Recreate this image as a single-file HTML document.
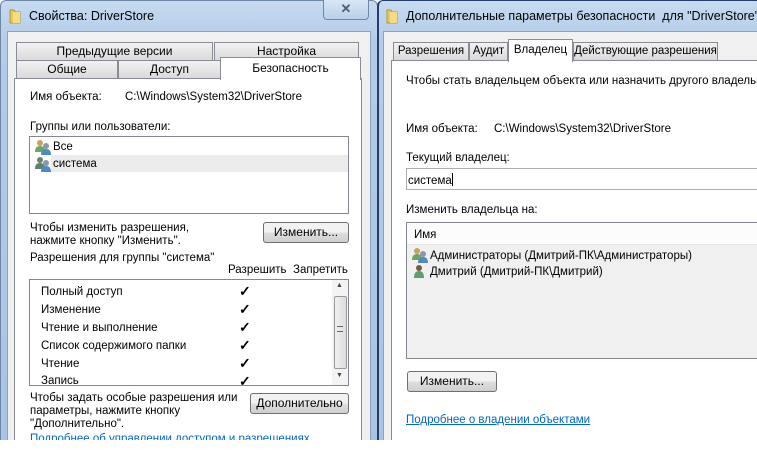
<!DOCTYPE html>
<html><head><meta charset="utf-8"><style>
*{margin:0;padding:0;box-sizing:border-box}
body{width:757px;height:473px;background:#fff;position:relative;overflow:hidden;font-family:"Liberation Sans",sans-serif;font-size:11.5px;color:#000}
.a{position:absolute;white-space:nowrap}
.frame{position:absolute;background:linear-gradient(#c7dbf1,#b4cce8 40px,#a9c3e3);border:1px solid #6d87a7;border-radius:6px 6px 0 0}
.client{position:absolute;background:#f0f0f0;border:1px solid #8da2bf}
.page{position:absolute;background:#fff;border:1px solid #898c95}
.tab{position:absolute;background:linear-gradient(#f2f2f2,#dadada);border:1px solid #898c95;border-bottom:none;text-align:center;font-size:12px;line-height:16px;white-space:nowrap;overflow:hidden}
.tab.sel{background:#fff;z-index:2}
.box{position:absolute;background:#fff;border:1px solid #828790}
.btn{position:absolute;border:1px solid #707070;border-radius:3px;background:linear-gradient(#f2f2f2 45%,#dddddd 55%,#cfcfcf);text-align:center;font-size:12px}
.chk{position:absolute;font-size:14px;font-weight:bold}
</style></head><body>

<!-- LEFT WINDOW -->
<div class="frame" style="left:0;top:0;width:378px;height:445px"></div>
<svg class="a" style="left:9px;top:7px" width="12" height="17"><path d="M1 3h4l1 2h5v11H1z" fill="#e8c860" stroke="#b8962a"/><rect x="4" y="5" width="7" height="11" fill="#f5dc80"/></svg>
<div class="a" style="left:29px;top:9px;font-size:12.5px">Свойства: DriverStore</div>
<div class="a" style="left:323px;top:0;width:46px;height:20px;border:1px solid #6d87a7;border-top:none;border-radius:0 0 4px 4px;background:linear-gradient(#d9e6f5,#b9cfe9);text-align:center;font-weight:bold;color:#4b5d73;font-size:13px;line-height:18px">✕</div>
<div class="client" style="left:7px;top:31px;width:364px;height:414px"></div>
<div class="tab" style="left:16px;top:42px;width:197px;height:18px">Предыдущие версии</div>
<div class="tab" style="left:214px;top:42px;width:145px;height:18px">Настройка</div>
<div class="tab" style="left:16px;top:60px;width:102px;height:18px">Общие</div>
<div class="tab" style="left:118px;top:60px;width:103px;height:18px">Доступ</div>
<div class="tab sel" style="left:220px;top:57px;width:141px;height:23px;line-height:20px">Безопасность</div>
<div class="page" style="left:14px;top:78px;width:348px;height:370px"></div>
<div class="a" style="left:30px;top:91px">Имя объекта:</div>
<div class="a" style="left:125px;top:91px">C:\Windows\System32\DriverStore</div>
<div class="a" style="left:30px;top:121px">Группы или пользователи:</div>
<div class="box" style="left:29px;top:136px;width:320px;height:78px"></div>
<div class="a" style="left:51px;top:155px;width:297px;height:17px;background:#ececec"></div>
<svg class="a" style="left:34px;top:139px" width="18" height="34"><circle cx="6" cy="4" r="3" fill="#c9a060"/><path d="M1 13q0-6 5-6q5 0 5 6z" fill="#6aa860"/><circle cx="12" cy="7" r="3" fill="#8a98a8"/><path d="M7 16q0-6 5-6q5 0 5 6z" fill="#4f8ac0"/><circle cx="6" cy="21" r="3" fill="#708070"/><path d="M1 30q0-6 5-6q5 0 5 6z" fill="#608070"/><circle cx="12" cy="24" r="3" fill="#8a98a8"/><path d="M7 33q0-6 5-6q5 0 5 6z" fill="#4f8ac0"/></svg>
<div class="a" style="left:53px;top:141px">Все</div>
<div class="a" style="left:53px;top:158px">система</div>
<div class="a" style="left:30px;top:222px">Чтобы изменить разрешения,</div>
<div class="a" style="left:30px;top:235px">нажмите кнопку "Изменить".</div>
<div class="btn" style="left:263px;top:222px;width:86px;height:21px;line-height:19px">Изменить...</div>
<div class="a" style="left:30px;top:252px">Разрешения для группы "система"</div>
<div class="a" style="left:228px;top:264px">Разрешить</div>
<div class="a" style="left:293px;top:264px">Запретить</div>
<div class="box" style="left:29px;top:279px;width:320px;height:107px;overflow:hidden">
 <div class="a" style="left:11px;top:6px">Полный доступ</div>
 <div class="a" style="left:11px;top:24px">Изменение</div>
 <div class="a" style="left:11px;top:42px">Чтение и выполнение</div>
 <div class="a" style="left:11px;top:60px">Список содержимого папки</div>
 <div class="a" style="left:11px;top:78px">Чтение</div>
 <div class="a" style="left:11px;top:95px">Запись</div>
 <div class="chk" style="left:209px;top:3px">✓</div>
 <div class="chk" style="left:209px;top:21px">✓</div>
 <div class="chk" style="left:209px;top:39px">✓</div>
 <div class="chk" style="left:209px;top:57px">✓</div>
 <div class="chk" style="left:209px;top:75px">✓</div>
 <div class="chk" style="left:209px;top:93px">✓</div>
 <div class="a" style="left:302px;top:0;width:17px;height:105px;background:#f3f3f3"></div>
 <div class="a" style="left:304px;top:16px;width:13px;height:73px;border:1px solid #9a9a9a;border-radius:2px;background:linear-gradient(90deg,#f0f0f0,#dcdcdc)"></div>
 <div class="a" style="left:306px;top:2px;font-size:7px;color:#444">▲</div>
 <div class="a" style="left:306px;top:92px;font-size:7px;color:#444">▼</div>
 <div class="a" style="left:307px;top:46px;width:6px;height:6px;border-top:1px solid #666;border-bottom:1px solid #666"></div>
</div>
<div class="a" style="left:30px;top:392px">Чтобы задать особые разрешения или</div>
<div class="a" style="left:30px;top:405px">параметры, нажмите кнопку</div>
<div class="a" style="left:30px;top:418px">"Дополнительно".</div>
<div class="btn" style="left:250px;top:393px;width:99px;height:21px;line-height:19px">Дополнительно</div>
<div class="a" style="left:30px;top:433px;color:#0066cc;text-decoration:underline">Подробнее об управлении доступом и разрешениях</div>

<!-- RIGHT WINDOW -->
<div class="frame" style="left:377px;top:0;width:390px;height:445px;border-color:#24406a;border-width:1px 0 0 2px"></div>
<svg class="a" style="left:386px;top:7px" width="12" height="17"><path d="M1 3h4l1 2h5v11H1z" fill="#e8c860" stroke="#b8962a"/><rect x="4" y="5" width="7" height="11" fill="#f5dc80"/></svg>
<div class="a" style="left:406px;top:9px;font-size:12.5px">Дополнительные параметры безопасности &nbsp;для "DriverStore"</div>
<div class="client" style="left:383px;top:31px;width:380px;height:414px"></div>
<div class="tab" style="left:393px;top:42px;width:76px;height:18px;font-size:11.5px">Разрешения</div>
<div class="tab" style="left:469px;top:42px;width:39px;height:18px;font-size:11.5px">Аудит</div>
<div class="tab sel" style="left:508px;top:39px;width:65px;height:23px;line-height:20px;font-size:11.5px">Владелец</div>
<div class="tab" style="left:573px;top:42px;width:145px;height:18px;font-size:11.5px">Действующие разрешения</div>
<div class="a" style="left:391px;top:60px;width:370px;height:380px;background:#fff;border-left:1px solid #898c95;border-top:1px solid #898c95"></div>
<div class="a" style="left:406px;top:75px">Чтобы стать владельцем объекта или назначить другого владельца,</div>
<div class="a" style="left:406px;top:123px">Имя объекта:</div>
<div class="a" style="left:494px;top:123px">C:\Windows\System32\DriverStore</div>
<div class="a" style="left:406px;top:152px">Текущий владелец:</div>
<div class="box" style="left:406px;top:168px;width:360px;height:22px;border-color:#abadb3"></div>
<div class="a" style="left:408px;top:173px">система<span style="display:inline-block;width:1px;height:13px;background:#000;vertical-align:-2px"></span></div>
<div class="a" style="left:406px;top:204px">Изменить владельца на:</div>
<div class="box" style="left:406px;top:222px;width:360px;height:137px;background:#f0f0f0;border-color:#828790"></div>
<div class="a" style="left:407px;top:223px;width:360px;height:22px;background:#fcfcfc;border-bottom:1px solid #e5e5e5"></div>
<div class="a" style="left:414px;top:229px">Имя</div>
<svg class="a" style="left:411px;top:247px" width="18" height="32"><circle cx="6" cy="4" r="3" fill="#c9a060"/><path d="M1 13q0-6 5-6q5 0 5 6z" fill="#6aa860"/><circle cx="12" cy="7" r="3" fill="#8a98a8"/><path d="M7 16q0-6 5-6q5 0 5 6z" fill="#4f8ac0"/><circle cx="8" cy="21" r="3" fill="#7a5a3a"/><path d="M3 31q0-7 5-7q5 0 5 7z" fill="#5aa070"/></svg>
<div class="a" style="left:430px;top:250px">Администраторы (Дмитрий-ПК\Администраторы)</div>
<div class="a" style="left:430px;top:266px">Дмитрий (Дмитрий-ПК\Дмитрий)</div>
<div class="btn" style="left:407px;top:371px;width:90px;height:21px;line-height:19px">Изменить...</div>
<div class="a" style="left:406px;top:414px;color:#0066cc;text-decoration:underline">Подробнее о владении объектами</div>

<div class="a" style="left:0;top:440px;width:757px;height:33px;background:#fff"></div>
</body></html>
